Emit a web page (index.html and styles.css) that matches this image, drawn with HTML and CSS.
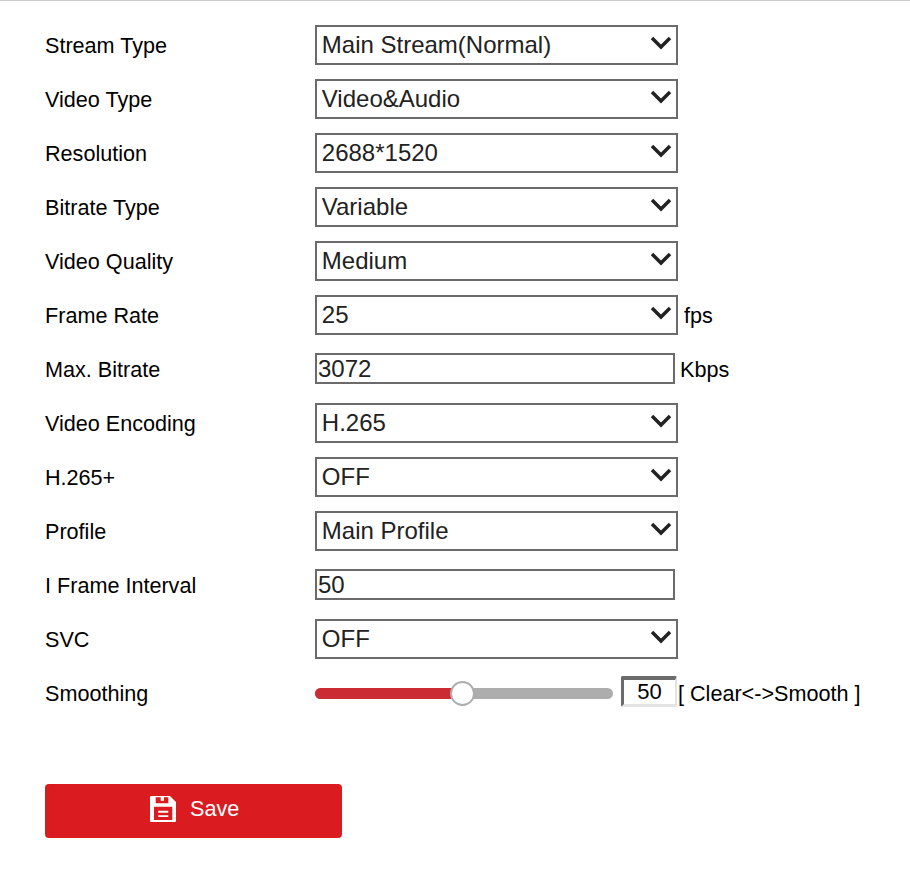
FILE: index.html
```html
<!DOCTYPE html>
<html lang="en">
<head>
    <meta charset="UTF-8">
    <title>Video Settings</title>
    <link rel="stylesheet" href="styles.css">
</head>
<body>
    <form class="settings">
        <div class="row">
            <label>Stream Type</label>
            <div class="select-wrap">
                <select><option>Main Stream(Normal)</option></select>
                <svg class="chevron" viewBox="0 0 22 14"><path d="M2 2l9 9 9-9"/></svg>
            </div>
        </div>
        <div class="row">
            <label>Video Type</label>
            <div class="select-wrap">
                <select><option>Video&amp;Audio</option></select>
                <svg class="chevron" viewBox="0 0 22 14"><path d="M2 2l9 9 9-9"/></svg>
            </div>
        </div>
        <div class="row">
            <label>Resolution</label>
            <div class="select-wrap">
                <select><option>2688*1520</option></select>
                <svg class="chevron" viewBox="0 0 22 14"><path d="M2 2l9 9 9-9"/></svg>
            </div>
        </div>
        <div class="row">
            <label>Bitrate Type</label>
            <div class="select-wrap">
                <select><option>Variable</option></select>
                <svg class="chevron" viewBox="0 0 22 14"><path d="M2 2l9 9 9-9"/></svg>
            </div>
        </div>
        <div class="row">
            <label>Video Quality</label>
            <div class="select-wrap">
                <select><option>Medium</option></select>
                <svg class="chevron" viewBox="0 0 22 14"><path d="M2 2l9 9 9-9"/></svg>
            </div>
        </div>
        <div class="row">
            <label>Frame Rate</label>
            <div class="select-wrap">
                <select><option>25</option></select>
                <svg class="chevron" viewBox="0 0 22 14"><path d="M2 2l9 9 9-9"/></svg>
            </div>
            <span class="unit">fps</span>
        </div>
        <div class="row">
            <label>Max. Bitrate</label>
            <input class="text-input" type="text" value="3072">
            <span class="unit unit-input">Kbps</span>
        </div>
        <div class="row">
            <label>Video Encoding</label>
            <div class="select-wrap">
                <select><option>H.265</option></select>
                <svg class="chevron" viewBox="0 0 22 14"><path d="M2 2l9 9 9-9"/></svg>
            </div>
        </div>
        <div class="row">
            <label>H.265+</label>
            <div class="select-wrap">
                <select><option>OFF</option></select>
                <svg class="chevron" viewBox="0 0 22 14"><path d="M2 2l9 9 9-9"/></svg>
            </div>
        </div>
        <div class="row">
            <label>Profile</label>
            <div class="select-wrap">
                <select><option>Main Profile</option></select>
                <svg class="chevron" viewBox="0 0 22 14"><path d="M2 2l9 9 9-9"/></svg>
            </div>
        </div>
        <div class="row">
            <label>I Frame Interval</label>
            <input class="text-input" type="text" value="50">
        </div>
        <div class="row">
            <label>SVC</label>
            <div class="select-wrap">
                <select><option>OFF</option></select>
                <svg class="chevron" viewBox="0 0 22 14"><path d="M2 2l9 9 9-9"/></svg>
            </div>
        </div>
        <div class="row">
            <label>Smoothing</label>
            <div class="slider">
                <div class="slider-fill"></div>
                <div class="slider-knob"></div>
            </div>
            <input class="slider-value" type="text" value="50">
            <span class="slider-hint">[ Clear&lt;-&gt;Smooth ]</span>
        </div>
        <button type="button" class="save">
            <svg class="save-icon" viewBox="0 0 26 26">
                <path fill="#fff" fill-rule="evenodd" d="M1 0h19l6 6v19a1 1 0 0 1-1 1H1a1 1 0 0 1-1-1V1a1 1 0 0 1 1-1zM5.700 1.300v6h12.600v-6h-4.300v3.400h-3.300V1.300zM4 10.700V24h18.300V10.700z"/>
                <path fill="#fff" d="M8.300 14.700h10v2h-10zM8.300 19.300h10v1.800h-10z"/>
            </svg>
            <span>Save</span>
        </button>
    </form>
</body>
</html>
```

FILE: styles.css
```css
body {
    margin: 0;
    background: #fff;
    font-family: "Liberation Sans", Arial, sans-serif;
    color: #000;
}
.settings {
    border-top: 1px solid #ccc;
    padding: 17px 0 0 45px;
}
.row {
    display: flex;
    align-items: center;
    height: 54px;
    font-size: 21.6px;
}
.row label {
    width: 270px;
    flex: none;
    padding-top: 2px;
}
.select-wrap {
    position: relative;
    width: 363px;
    height: 40px;
    flex: none;
}
select {
    appearance: none;
    display: block;
    box-sizing: border-box;
    width: 100%;
    height: 100%;
    margin: 0;
    padding: 0 0 2px 4.800px;
    border: 2px solid #6b6b6b;
    border-radius: 0;
    background: #fff;
    color: #222;
    font-family: inherit;
    font-size: 24px;
}
.chevron {
    position: absolute;
    top: 11px;
    right: 6px;
    width: 22px;
    height: 14px;
    fill: none;
    stroke: #222;
    stroke-width: 3.5;
}
.unit {
    margin-left: 6px;
    padding-top: 2px;
}
.unit-input {
    margin-left: 5px;
}
.text-input {
    box-sizing: border-box;
    width: 360px;
    height: 31px;
    margin: -1px 0 0;
    padding: 0 0 0 1px;
    border: 2px solid #6b6b6b;
    color: #222;
    font-family: inherit;
    font-size: 24px;
    outline: none;
}
.slider {
    position: relative;
    width: 298px;
    height: 11px;
    flex: none;
    background: #adadad;
    border-radius: 6px;
}
.slider-fill {
    width: 147px;
    height: 100%;
    background: #cb2b33;
    border-radius: 6px 0 0 6px;
}
.slider-knob {
    position: absolute;
    top: -7px;
    left: 135px;
    box-sizing: border-box;
    width: 25px;
    height: 25px;
    border: 2px solid #adadad;
    border-radius: 50%;
    background: #fff;
}
.slider-value {
    box-sizing: border-box;
    width: 56px;
    height: 31px;
    margin: -3px 0 0 8px;
    padding: 0;
    border-style: solid;
    border-width: 4px 2px 3px 3px;
    border-color: #6b6b6b #e3e3e3 #e3e3e3 #6b6b6b;
    border-radius: 2px;
    color: #000;
    font-family: inherit;
    font-size: 22px;
    text-align: center;
    outline: none;
}
.slider-hint {
    margin-left: 1px;
    padding-top: 2px;
    white-space: nowrap;
}
.save {
    display: flex;
    align-items: center;
    gap: 14px;
    width: 297px;
    height: 54px;
    margin-top: 64px;
    padding: 0 0 4px 105px;
    border: none;
    border-radius: 4px;
    background: #da1b20;
    color: #fff;
    font-family: inherit;
    font-size: 21.6px;
    cursor: pointer;
}
.save-icon {
    width: 26px;
    height: 26px;
}
```
